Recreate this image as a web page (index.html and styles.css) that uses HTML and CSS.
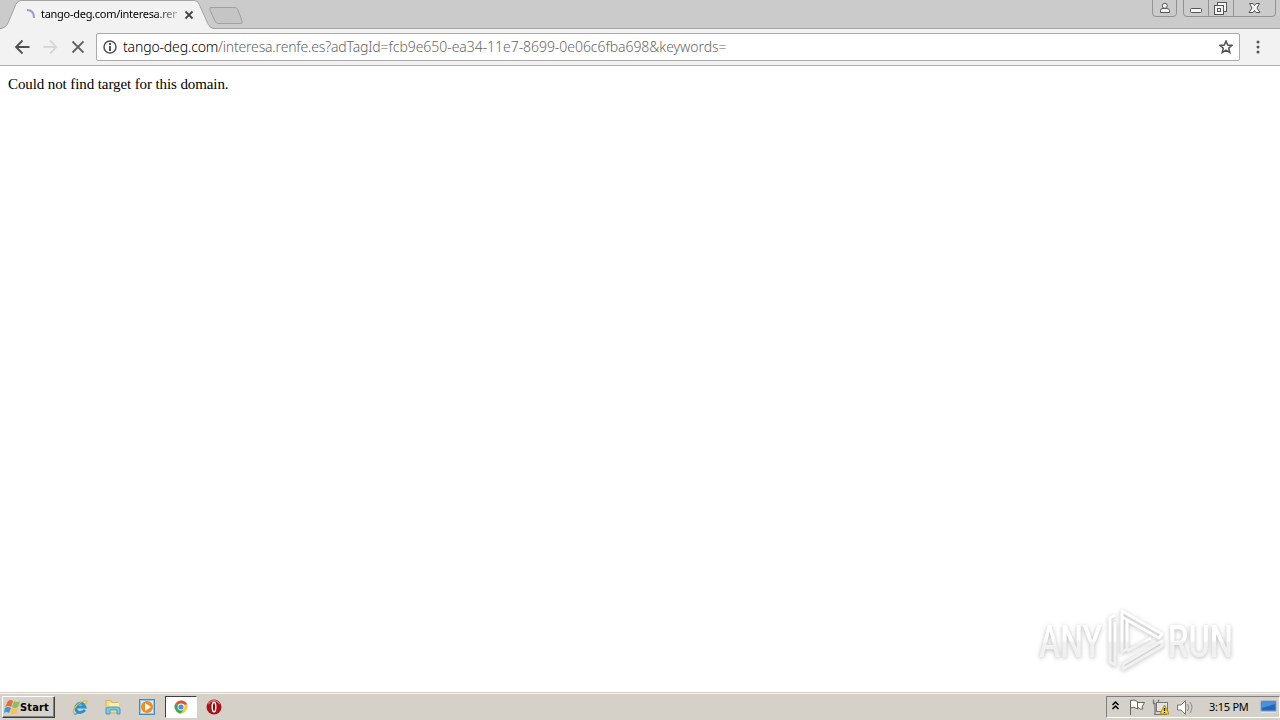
FILE: index.html
```html
<!DOCTYPE html>
<html lang="en">
<head>
<meta charset="utf-8">
<title>tango-deg.com</title>
<link rel="stylesheet" href="styles.css">
</head>
<body>
<div class="screen">
  <header class="tabstrip">
    <div class="tab">
      <svg class="tab-shape" width="214" height="29" viewBox="0 0 214 29"><path d="M0 29Q6 28 8 23L16 4Q18 .5 21 .5H194Q198 .5 199 4L208 24Q210 28.500 214 28.500V29Z" fill="#f2f2f2"/><path d="M0 28.500Q6 28 8 23L16 4Q18 .5 21 .5H194Q198 .5 199 4L208 24Q210 28.500 214 28.500" fill="none" stroke="#a3a3a3"/></svg>
      <svg class="spinner" width="12" height="14" viewBox="0 0 12 14"><path d="M2 2Q9 2 9 10" fill="none" stroke="#929dd3" stroke-width="2"/></svg>
      <span class="tab-title">tango-deg.com/interesa.ren</span>
      <svg class="tab-close" width="10" height="10" viewBox="0 0 10 10"><path d="M1.500 1.500L8.500 8.500M8.500 1.500L1.500 8.500" stroke="#444" stroke-width="1.800"/></svg>
    </div>
    <svg class="newtab" width="36" height="19" viewBox="0 0 36 19"><path d="M2 1.500H26Q28 1.500 29 4L33 15Q34 17.500 31 17.500H9Q7 17.500 6 15L1 4Q0 1.500 2 1.500Z" fill="#c5c5c5" stroke="#a0a0a0"/></svg>
    <svg class="controls" width="128" height="18" viewBox="0 0 128 18">
      <g fill="#cbcbcb" stroke="#929292"><path d="M.5-1V13Q.5 16.500 4 16.500H21Q24.500 16.500 24.500 13V-1M31.500-1V13Q31.500 16.500 35 16.500H120Q123.500 16.500 123.500 13V-1M56.500 0V16M81.500 0V16"/></g>
      <g fill="#f5f5f5" stroke="#555"><path d="M8.500 12.500V10.500Q8.500 8.500 11 8.500H14.500Q17.500 8.500 17.500 10.500V12.500Z"/><circle cx="12.800" cy="5.800" r="2.500"/><rect x="38.500" y="8.500" width="11" height="4" rx="1"/><rect x="65.500" y="2.500" width="9" height="9"/><rect x="62.500" y="5.500" width="9" height="9"/><rect x="65.500" y="8.500" width="3" height="3"/><path d="M97.500 3.500H101L102.500 5.500L104 3.500H107.500L105 8L108 12.500H104L102.500 10.500L101 12.500H97L100 8Z"/></g>
    </svg>
  </header>
  <nav class="toolbar">
    <svg class="nav-icons" width="76" height="20" viewBox="0 0 76 20"><g fill="none" stroke-width="1.800"><path d="M22 10H9.500M15 3.500L8.500 10L15 16.500" stroke="#505050"/><path d="M36 10H48.500M42.500 3.500L49 10L42.500 16.500" stroke="#d8d8d8"/><path d="M65 4.500L76 15.500M76 4.500L65 15.500" stroke="#606060"/></g></svg>
    <div class="omnibox">
      <svg class="info" width="14" height="14" viewBox="0 0 14 14"><circle cx="7" cy="7" r="6" fill="none" stroke="#505050" stroke-width="1.500"/><path d="M7 3V5M7 6V11" stroke="#505050" stroke-width="2"/></svg>
      <span class="host">tango-deg.com</span><span class="path">/interesa.renfe.es?adTagId=</span><span class="query">fcb9e650-ea34-11e7-8699-0e06c6fba698&amp;keywords=</span>
      <svg class="star" width="14" height="14" viewBox="0 0 14 14"><path d="M7 1L8.700 5.100L13 5.400L9.700 8.200L10.800 12.600L7 10.200L3.200 12.600L4.300 8.200L1 5.400L5.300 5.100Z" fill="none" stroke="#505050" stroke-width="1.500"/></svg>
    </div>
    <svg class="menu" width="4" height="14" viewBox="0 0 4 14"><g fill="#555"><circle cx="2" cy="2" r="1.500"/><circle cx="2" cy="7" r="1.500"/><circle cx="2" cy="12" r="1.500"/></g></svg>
  </nav>
  <main class="page">
    <p class="message">Could not find target for this domain.</p>
    <svg class="watermark" width="220" height="80" viewBox="0 0 220 80">
      <defs><linearGradient id="fade" gradientUnits="userSpaceOnUse" x1="0" y1="0" x2="0" y2="76"><stop offset=".48" stop-color="#fff"/><stop offset=".53" stop-color="#f1f1f1"/></linearGradient></defs>
      <g class="mark-text"><text x="9" y="54" textLength="63" lengthAdjust="spacingAndGlyphs">ANY</text><text x="138" y="54" textLength="65" lengthAdjust="spacingAndGlyphs">RUN</text></g>
      <g class="mark-play" stroke-linejoin="round"><path d="M85 12L80 15V59L85 62V19M92 8L132 31L129 35L92 14ZM92 8V49L97 46V16M132 38L93 61V66L132 43ZM97 48L121 35"/></g>
    </svg>
  </main>
  <footer class="taskbar">
    <div class="start"><svg width="17" height="16" viewBox="0 0 17 16"><path d="M4 2Q7 0 9 2L7 8Q5 6 1 8Z" fill="#ed6938"/><path d="M10 2Q13 4 16 2L14 8Q11 10 8 8Z" fill="#90bd55"/><path d="M1 9Q4 7 7 9L5 14Q3 12 0 14Z" fill="#4095d6"/><path d="M8 9Q11 11 14 9L12 15Q9 16 6 14Z" fill="#f5c44b"/></svg><span class="start-label">Start</span></div>
    <svg class="ql ie" width="18" height="18" viewBox="0 0 18 18"><path d="M14 12Q10 16 6 13.500Q3 9 7 6Q12 3.500 14 9H6" fill="none" stroke="#2494d5" stroke-width="2.800"/><path d="M3 16Q0 14 6 7Q14 1 16 3Q17 4 14 7" fill="none" stroke="#e6bc35" stroke-width="1.200"/><path d="M3 16Q5 17 8 14" fill="none" stroke="#2684bb"/></svg>
    <svg class="ql folder" width="16" height="17" viewBox="0 0 16 17"><path d="M1 1.500H6L7 3.500H13V14H1Z" fill="#f4dc83" stroke="#cfb566"/><path d="M4 4H14V12H4Z" fill="#fff0a9"/><path d="M1 15V10Q1 8 4 8H12Q15 8 15 10V15H12V11H5V15Z" fill="#7bc6e7" stroke="#4d9bc0"/></svg>
    <svg class="ql media" width="17" height="17" viewBox="0 0 17 17"><rect x=".5" y=".5" width="15" height="15" fill="#95c9ed" stroke="#438bb9"/><rect x="2" y="2" width="12" height="12" fill="#d6ecfa"/><circle cx="8" cy="8" r="6" fill="#f28b20"/><path d="M6 4L12 8L6 12Z" fill="#fff"/></svg>
    <div class="task-active"><svg width="14" height="14" viewBox="0 0 14 14"><circle cx="7" cy="7" r="6.500" fill="#f5cf36"/><path d="M7 7L1.300 3.800Q4 0 8 .5Q12 1 13.300 4.500H7Z" fill="#dd5145"/><path d="M7 7L1.300 3.800Q-1 8 3 12Q5 13.500 7 13.500L10 9Z" fill="#3ba45c"/><circle cx="7" cy="7" r="3.400" fill="#fff"/><circle cx="7" cy="7" r="2.600" fill="#518bdd"/></svg></div>
    <svg class="ql opera" width="16" height="16" viewBox="0 0 16 16"><circle cx="8" cy="8" r="7.500" fill="#a91418"/><path d="M2 5Q8-2 14 5" fill="none" stroke="#dc6769" stroke-width="1.500"/><ellipse cx="8" cy="8" rx="1.800" ry="4.800" fill="#8e080b" stroke="#fff" stroke-width="1.400"/></svg>
    <div class="tray">
      <svg class="tray-icons" width="90" height="20" viewBox="0 0 90 20">
        <path d="M5.500 8L8.500 5L11.500 8M5.500 12L8.500 9L11.500 12" fill="none" stroke="#000" stroke-width="1.500"/>
        <path d="M23.500 3V18M23.500 3.500Q27 2 30.500 4.500V12Q27 9 23.500 11M30.500 5.500H37.500L35 10L36 12Q33 13 30.500 10" fill="#faf9f5" stroke="#666"/>
        <path d="M46.500 2.500V6.500H48V17M49.500 6.500H51.500V2.500" fill="none" stroke="#777" stroke-width="1.300"/><rect x="49.500" y="5.500" width="11" height="9" fill="#e4e3dc" stroke="#777"/><path d="M47 17.500H60" stroke="#777"/><path d="M57.500 8L62 17H53Z" fill="#ffd72e" stroke="#b38b10"/><path d="M57.500 11V14M57.500 15V16" stroke="#222" stroke-width="1.300"/>
        <path d="M70.500 8H74L78.500 3.500V17.500L74 13H70.500Z" fill="#fff" stroke="#777"/><path d="M80.500 7Q83 10.500 80.500 14M83 5Q87 10.500 83 16" fill="none" stroke="#888"/>
      </svg>
      <span class="clock">3:15 PM</span>
      <svg class="desktop" width="17" height="14" viewBox="0 0 17 14"><path d="M1 1H16V11H1Z" fill="#2465b9" stroke="#86a7c8"/><path d="M2 2H15V4L2 8Z" fill="#4692dc"/><path d="M1 12.500H16" stroke="#dbe4ed"/></svg>
    </div>
  </footer>
</div>
</body>
</html>
```
FILE: styles.css
```css
* { box-sizing: border-box; }
body { margin: 0; background: #fff; overflow: hidden; font-family: "Noto Sans", sans-serif; }
svg { display: block; flex: none; }
.screen { width: 1280px; height: 720px; display: flex; flex-direction: column; }
.tabstrip { height: 29px; display: flex; align-items: flex-start; background: #cbcbcb; border-bottom: 1px solid #a3a3a3; flex: none; }
.tab { position: relative; width: 209px; height: 29px; display: flex; align-items: center; padding-left: 25px; flex: none; }
.tab-shape { position: absolute; left: 0; top: 0; }
.spinner { position: relative; }
.tab-title { position: relative; width: 136px; margin: -2px 0 0 4px; white-space: nowrap; color: #000; font-size: 11px; line-height: 20px; letter-spacing: -.28px; mask-image: linear-gradient(90deg, #000 84%, rgba(0, 0, 0, .3) 100%); }
.tab-close { position: relative; margin-left: 7px; margin-top: 1px; }
.newtab { margin-top: 6px; }
.controls { margin-left: auto; }
.toolbar { height: 37px; display: flex; align-items: center; background: #f2f2f2; border-bottom: 1px solid #afafaf; padding-left: 7px; flex: none; }
.nav-icons { width: 77px; }
.omnibox { width: 1144px; height: 28px; margin-left: 12px; border: 1px solid #aaa; border-radius: 2px; background: #fff; display: flex; align-items: center; padding: 0 6px; color: #666; font-size: 14px; line-height: 20px; font-weight: 300; white-space: nowrap; }
.info { margin-right: 6px; }
.host { color: #000; width: 95px; letter-spacing: -.15px; }
.path { width: 170.500px; letter-spacing: -.18px; }
.query { width: 340px; letter-spacing: -.05px; }
.star { margin-left: auto; }
.menu { margin-left: 16px; }
.page { position: relative; height: 627px; flex: none; }
.message { margin: 0; padding: 9px 8px; font: 15px/19px "Liberation Serif", serif; letter-spacing: -.1px; color: #000; }
.watermark { position: absolute; left: 1030px; top: 537px; overflow: visible; filter: drop-shadow(0 1px 2px #bbb); }
.mark-text { fill: url(#fade); font: 500 45px Roboto, sans-serif; }
.mark-play { fill: none; stroke: url(#fade); stroke-width: 3; }
.taskbar { height: 27px; background: #d5d0c8; border-top: 1px solid #f5f3ef; box-shadow: 0 -1px #d5d0c8; display: flex; align-items: center; padding-left: 2px; flex: none; }
.start { width: 53px; height: 22px; display: flex; align-items: center; padding-left: 1px; border: 1px solid; border-color: #fff #404040 #404040 #fff; box-shadow: inset -1px -1px #808080; font: bold 11px "DejaVu Sans Condensed", "DejaVu Sans", sans-serif; }
.start-label { margin-left: -1px; letter-spacing: .15px; }
.ie { margin-left: 16px; }
.folder { margin-left: 16px; }
.media { margin-left: 18px; }
.task-active { width: 32px; height: 22px; display: flex; align-items: center; justify-content: center; margin-left: 9px; background: #fff; border: 1px solid; border-color: #404040 #fff #fff #404040; }
.opera { margin-left: 9px; }
.tray { width: 174px; height: 22px; display: flex; align-items: center; margin-left: auto; border: 1px solid; border-color: #808080 #fff #fff #808080; }
.clock { width: 42px; margin: -2px 0 0 12px; font-size: 11px; letter-spacing: -.25px; white-space: nowrap; }
.desktop { margin-left: 9px; }
```
